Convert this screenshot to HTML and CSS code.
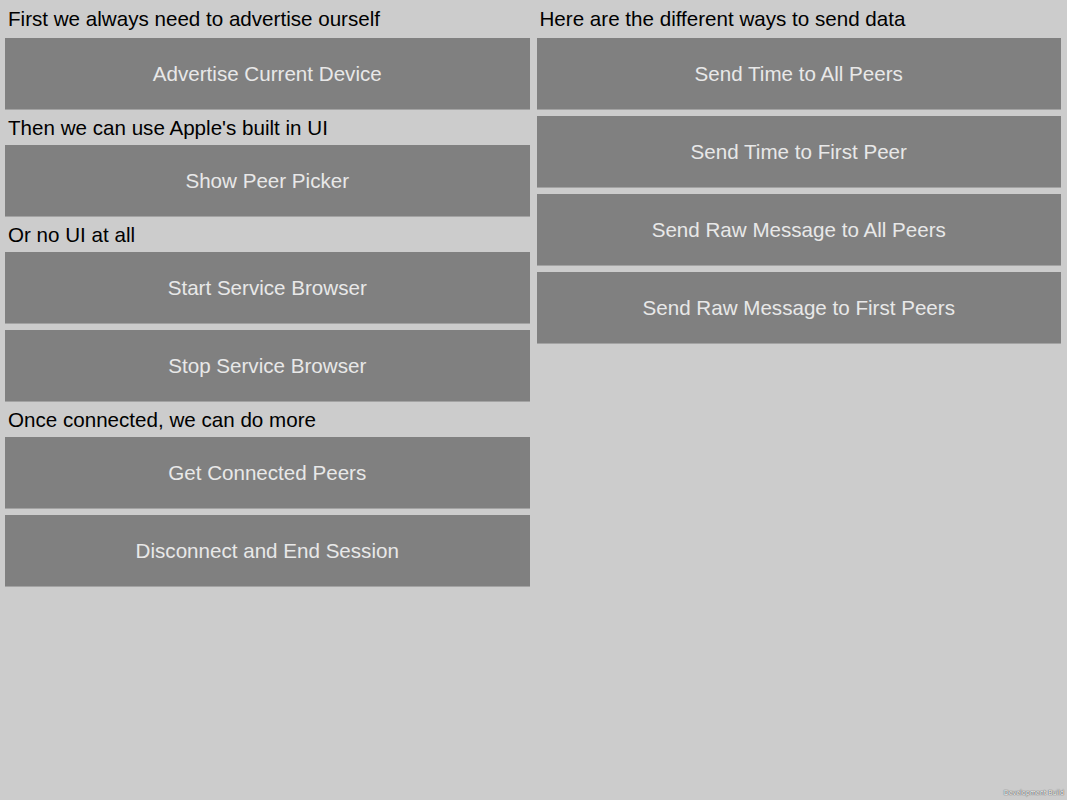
FILE: index.html
```html
<!DOCTYPE html>
<html>
<head>
<meta charset="utf-8">
<link rel="stylesheet" href="styles.css">
</head>
<body>
<div class="page">
  <div class="col">
    <div class="label first">First we always need to advertise ourself</div>
    <div class="btn">Advertise Current Device</div>
    <div class="label">Then we can use Apple's built in UI</div>
    <div class="btn">Show Peer Picker</div>
    <div class="label">Or no UI at all</div>
    <div class="btn">Start Service Browser</div>
    <div class="btn spaced">Stop Service Browser</div>
    <div class="label">Once connected, we can do more</div>
    <div class="btn">Get Connected Peers</div>
    <div class="btn spaced">Disconnect and End Session</div>
  </div>
  <div class="col">
    <div class="label first">Here are the different ways to send data</div>
    <div class="btn">Send Time to All Peers</div>
    <div class="btn spaced">Send Time to First Peer</div>
    <div class="btn spaced">Send Raw Message to All Peers</div>
    <div class="btn spaced">Send Raw Message to First Peers</div>
  </div>
</div>
<div class="watermark">Development Build</div>
</body>
</html>
```
FILE: styles.css
```css
html, body {
  margin: 0;
  padding: 0;
  background: #cccccc;
  width: 1067px;
  height: 800px;
  overflow: hidden;
  font-family: "Liberation Sans", Arial, sans-serif;
}
.page {
  display: flex;
  gap: 7px;
  padding: 0 6px 0 5px;
}
.col {
  flex: 1;
  display: flex;
  flex-direction: column;
}
.label {
  height: 35px;
  line-height: 35px;
  font-size: 20.6px;
  color: #000;
  padding-left: 3px;
  white-space: nowrap;
}
.label.first {
  height: 38px;
  line-height: 37px;
}
.btn {
  height: 71px;
  background: #808080;
  border-bottom: 1px solid #a3a3a3;
  color: #e8e8e8;
  font-size: 20.6px;
  display: flex;
  align-items: center;
  justify-content: center;
  white-space: nowrap;
}
.btn.spaced {
  margin-top: 6px;
}
.watermark {
  position: absolute;
  right: 3px;
  bottom: 3px;
  font-size: 7px;
  line-height: 8px;
  color: #ffffff;
  text-shadow: 0 0 1px #444, 0 0 1px #444;
  font-family: "DejaVu Sans Condensed", "DejaVu Sans", sans-serif;
}
```
